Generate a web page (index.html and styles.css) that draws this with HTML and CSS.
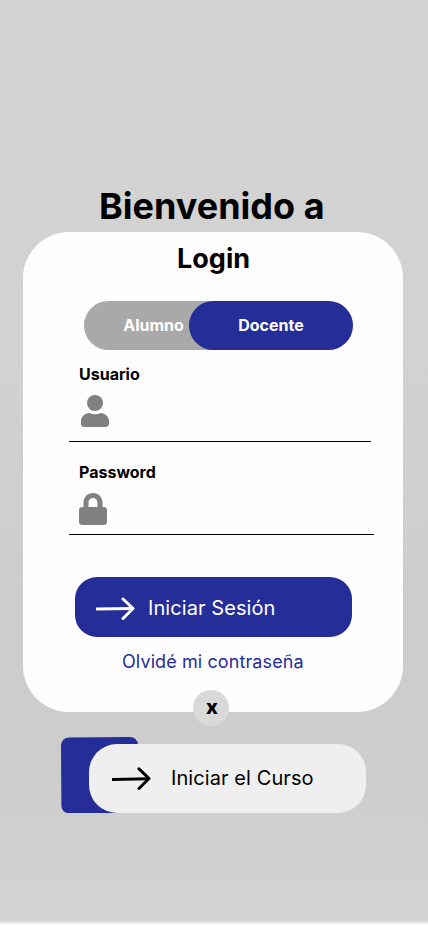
FILE: index.html
```html
<!DOCTYPE html>
<html lang="es">
<head>
<meta charset="utf-8">
<meta name="viewport" content="width=device-width, initial-scale=1">
<title>Login</title>
<link rel="stylesheet" href="styles.css">
</head>
<body>
<main class="screen">
  <h1 class="welcome">Bienvenido a</h1>
  <section class="card">
    <h2 class="card-title">Login</h2>
    <div class="tabs">
      <button class="tab tab-student">Alumno</button>
      <button class="tab tab-teacher">Docente</button>
    </div>
    <div class="field field-user">
      <span class="label">Usuario</span>
      <svg class="user-icon" width="28" height="32" viewBox="0 0 448 512" fill="#808080"><circle cx="224" cy="128" r="128"/><path d="M314.700 288c-28 12.800-58 20-90.700 20s-62-7.200-90.700-20C59.700 288 0 347.700 0 421.300V464c0 26.500 21.500 48 48 48h352c26.500 0 48-21.500 48-48v-42.700C448 347.700 388.300 288 314.700 288z"/></svg>
    </div>
    <div class="field field-password">
      <span class="label">Password</span>
      <svg class="lock-icon" width="28" height="32" viewBox="0 0 448 512" fill="#808080"><path d="M400 224h-24v-72C376 68.200 307.800 0 224 0S72 68.200 72 152v72H48c-26.500 0-48 21.500-48 48v192c0 26.500 21.500 48 48 48h352c26.500 0 48-21.500 48-48V272c0-26.500-21.500-48-48-48zm-104 0H152v-72c0-39.700 32.300-72 72-72s72 32.300 72 72v72z"/></svg>
    </div>
    <button class="submit">
      <svg class="arrow" width="40" height="24" viewBox="0 0 40 24" fill="none" stroke="currentColor" stroke-width="3"><path d="M1 13L37 12.500"/><path d="M28 3L38 12.500 28 22.500" stroke-linecap="round" stroke-linejoin="round"/></svg>
      <span>Iniciar Sesión</span>
    </button>
    <a class="forgot">Olvidé mi contraseña</a>
    <button class="close">x</button>
  </section>
  <div class="course">
    <svg class="course-accent" width="77" height="76" viewBox="0 0 77 76" fill="#252d99"><path d="M8 .4L69 0a8 8 0 0 1 8 8V76H8a7 7 0 0 1-7.600-7L0 8.400a8 8 0 0 1 8-8z"/></svg>
    <button class="course-button">
      <svg class="arrow" width="40" height="24" viewBox="0 0 40 24" fill="none" stroke="currentColor" stroke-width="3"><path d="M1 13.500L37 12.700"/><path d="M28 2.800L38 12.500 28 22.500" stroke-linecap="round" stroke-linejoin="round"/></svg>
      <span>Iniciar el Curso</span>
    </button>
  </div>
</main>
</body>
</html>
```
FILE: styles.css
```css
* {
  box-sizing: border-box;
}

body {
  margin: 0;
  font-family: Inter, sans-serif;
  color: #000;
}

button {
  border: 0;
  padding: 0;
  font: inherit;
}

svg {
  display: block;
  flex: none;
}

.screen {
  height: 926px;
  padding-top: 183px;
  background: linear-gradient(transparent 920px, #fff 925px), linear-gradient(#d3d3d3 0, #d2d2d2 350px, #cdcdcd 600px, #cdcdcd 780px, #d3d3d3 920px);
}

.welcome {
  margin: 0;
  padding-left: 99px;
  font-size: 36px;
  line-height: 46px;
  font-weight: 700;
  white-space: nowrap;
}

.card {
  position: relative;
  width: 380px;
  height: 480px;
  margin: 3px 0 0 23px;
  padding: 10px 0 0 46px;
  border-radius: 46px;
  background: #fffdff;
}

.card-title {
  margin: 0;
  padding-left: 108px;
  font-size: 27px;
  line-height: 34px;
  font-weight: 700;
}

.tabs {
  display: flex;
  width: 269px;
  height: 49px;
  margin: 25px 0 0 15px;
  font-size: 16px;
  font-weight: 700;
}

.tab {
  height: 49px;
  padding-bottom: 2px;
  border-radius: 25px;
  color: #fff;
}

.tab-student {
  width: 164px;
  padding-right: 25px;
  background: #a9a9a9;
}

.tab-teacher {
  width: 164px;
  margin-left: -59px;
  background: #252d99;
}

.field {
  padding-left: 10px;
  border-bottom: 1px solid #000;
}

.field-user {
  width: 302px;
  height: 77px;
  margin-top: 15px;
}

.field-password {
  width: 305px;
  height: 72px;
  margin-top: 21px;
}

.label {
  display: block;
  font-size: 16px;
  line-height: 19px;
  font-weight: 700;
}

.user-icon {
  margin: 11px 0 0 2px;
}

.lock-icon {
  margin-top: 11px;
}

.submit {
  display: flex;
  align-items: center;
  gap: 13px;
  width: 277px;
  height: 60px;
  margin: 42px 0 0 6px;
  padding: 2px 0 0 20px;
  border-radius: 22px;
  background: #252d99;
  color: #fff;
  font-size: 20px;
  letter-spacing: .08px;
}

.forgot {
  display: block;
  margin: 14px 0 0 53px;
  font-size: 18px;
  line-height: 22px;
  letter-spacing: .1px;
  color: #252d99;
}

.close {
  position: absolute;
  left: 170px;
  bottom: -14px;
  width: 36px;
  height: 36px;
  padding: 0 0 2px 2px;
  border-radius: 50%;
  background: #d9d9d9;
  color: #000;
  font-size: 20px;
  font-weight: 800;
}

.course {
  display: flex;
  align-items: flex-end;
  margin: 25px 0 0 61px;
}

.course-button {
  display: flex;
  align-items: center;
  gap: 20px;
  width: 277px;
  height: 69px;
  margin-left: -49px;
  padding: 0 0 2px 22px;
  border-radius: 28px;
  background: #efefef;
  color: #000;
  font-size: 20px;
  letter-spacing: .08px;
}
```
